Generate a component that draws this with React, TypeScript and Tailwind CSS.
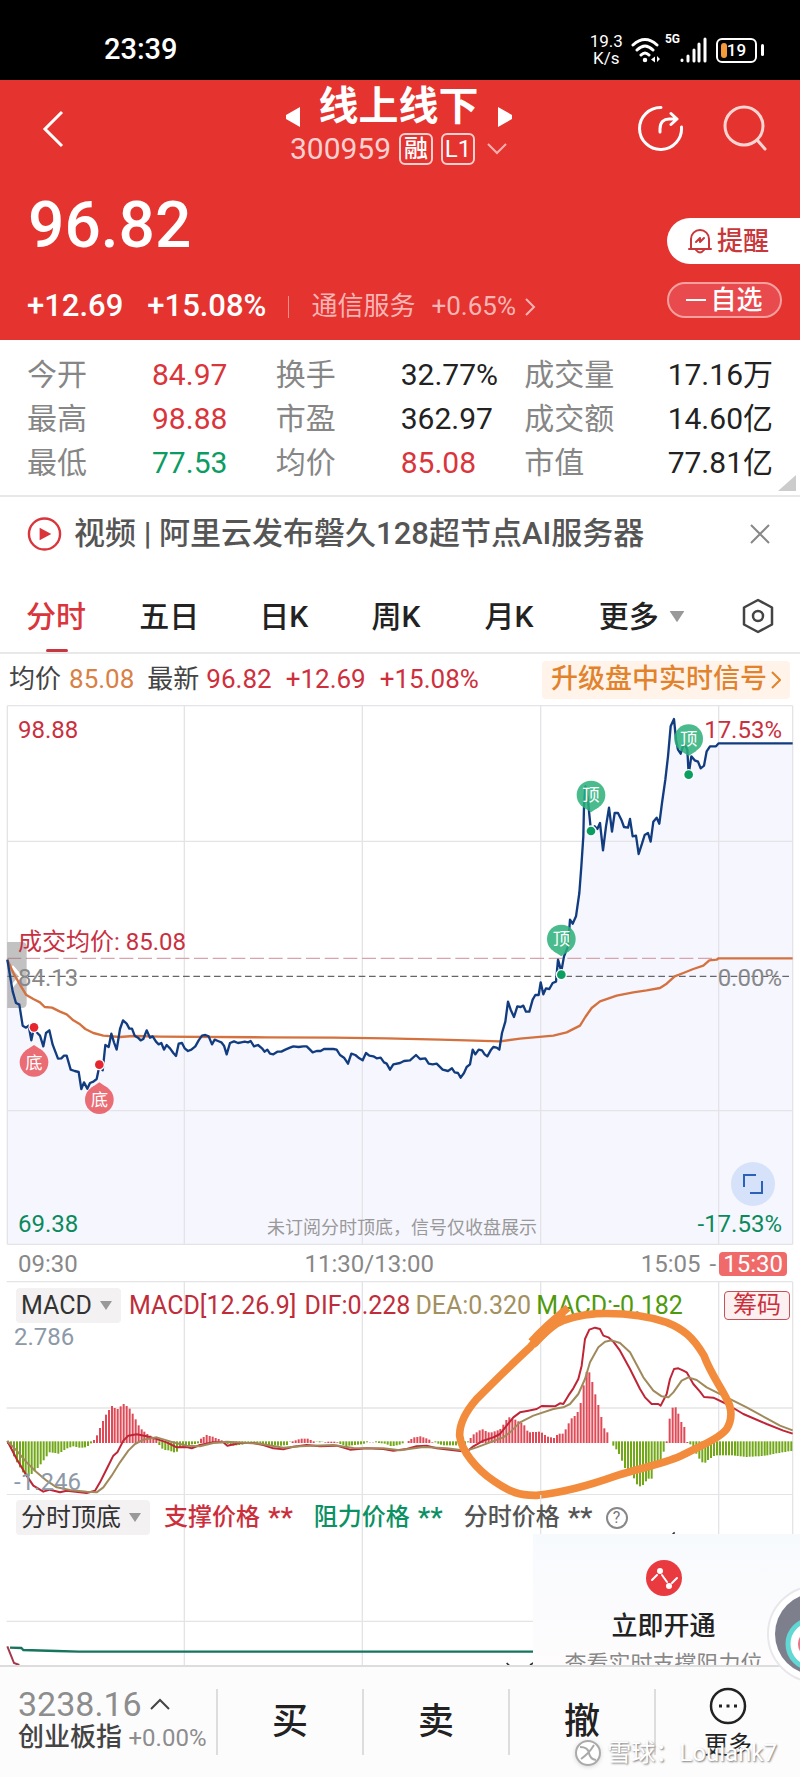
import type { ReactNode } from "react";

type Point = [number, number];

const parse = (raw: string): Point[] =>
  raw
    .trim()
    .split(/\s+/)
    .map((pair) => pair.split(",").map(Number) as Point);

// All charts use three drawing units per CSS pixel
const PRICE = parse(`
22,810 32,870 38,905 48,940 58,945 68,1008 78,1014 86,1008 94,1052 102,1013 112,1030 120,1038 130,1070 138,1030
148,1022 158,1065 174,1107 184,1106 192,1098 200,1098 212,1140 224,1144 236,1147 244,1198 252,1178 262,1197
270,1180 280,1176 290,1168 298,1130 308,1142 316,1066 326,1072 334,1032 342,1058 350,1080 360,1018 369,992
380,1002 388,1017 396,1017 404,1038 414,1044 422,1052 430,1048 440,1022 450,1044 458,1040 468,1056 476,1064
484,1060 492,1080 500,1066 510,1076 520,1090 528,1099 536,1062 546,1060 554,1076 564,1084 574,1080 586,1070
596,1052 606,1038 616,1036 626,1040 636,1064 644,1050 654,1054 664,1058 672,1068 680,1094 690,1060 702,1055
714,1060 724,1058 734,1056 744,1058 752,1054 762,1070 774,1066 786,1076 794,1086 802,1080 810,1092 820,1094
832,1086 844,1086 856,1080 870,1074 880,1070 896,1072 910,1070 920,1070 930,1080 938,1088 950,1084 962,1084
972,1078 984,1078 1000,1078 1010,1080 1020,1096 1032,1104 1044,1122 1054,1092 1066,1096 1078,1106 1088,1112
1098,1090 1108,1098 1120,1100 1130,1106 1142,1104 1152,1118 1160,1122 1170,1140 1180,1124 1200,1120 1212,1114
1230,1112 1248,1096 1260,1108 1276,1106 1286,1122 1298,1124 1310,1122 1328,1140 1344,1144 1356,1136 1364,1148
1374,1150 1382,1164 1392,1150 1400,1132 1410,1124 1418,1080 1426,1094 1436,1080 1446,1082 1454,1094 1462,1100
1472,1082 1480,1072 1490,1074 1498,1080 1506,1030 1516,996 1524,936 1532,960 1542,982 1552,950 1562,952
1570,948 1578,966 1588,966 1598,930 1606,916 1616,916 1622,878 1630,914 1638,896 1648,898 1658,880 1668,876
1674,810 1684,845 1692,800 1704,770 1710,690 1718,702 1728,680 1738,610 1744,530 1750,440 1752,350 1756,290
1764,330 1768,375 1773,424 1784,410 1792,418 1800,400 1809,482 1818,410 1827,354 1836,426 1844,370 1854,370
1864,390 1872,412 1884,414 1890,388 1898,440 1908,438 1916,493 1926,462 1934,436 1944,430 1952,456 1960,396
1970,384 1978,402 1986,340 1996,270 2004,200 2012,110 2022,88 2028,150 2034,180 2042,192 2052,160 2062,180
2066,254 2074,200 2084,212 2094,216 2102,236 2112,228 2120,185 2130,170 2148,170 2156,161 2378,161`);

const AVERAGE = parse(`
22,810 40,850 60,885 78,915 100,928 120,938 134,952 156,954 180,966 200,974 220,992 240,1004 256,1018 280,1030
310,1038 360,1042 400,1039 480,1041 800,1043 1000,1044 1160,1046 1320,1050 1400,1052 1500,1055 1560,1047
1660,1038 1700,1028 1740,1008 1756,982 1775,955 1800,935 1850,918 1900,908 1940,902 1980,895 2000,882 2024,860
2050,850 2080,838 2110,828 2128,812 2150,810 2156,806 2378,806`);

const DIF = parse(`
22,516 50,570 80,620 100,650 130,668 150,662 180,670 200,665 260,672 285,665 300,640 320,600 340,560 352,550
370,515 385,500 410,496 440,502 470,510 500,520 530,535 560,534 575,538 600,528 640,520 670,520 682,530 720,522
760,522 790,528 820,538 850,541 880,533 920,528 960,532 1010,530 1050,542 1100,538 1150,540 1180,545 1220,540
1250,532 1280,530 1310,538 1400,548 1420,532 1450,515 1480,505 1500,495 1520,470 1540,445 1560,430 1585,425
1610,420 1625,411 1665,412 1680,403 1690,405 1705,380 1720,358 1735,330 1745,290 1755,210 1768,182 1785,176
1800,180 1810,200 1825,205 1840,218 1860,245 1890,300 1920,360 1935,385 1955,405 1975,405 1982,410 2000,375
2010,330 2022,300 2035,298 2050,305 2060,310 2080,345 2100,368 2112,384 2140,386 2180,405 2230,435 2300,465
2350,485 2378,494`);

const DEA = parse(`
22,516 50,545 80,580 110,610 140,635 170,655 210,663 260,668 290,670 310,655 335,620 360,580 385,545 405,525
430,512 470,505 520,520 560,530 600,532 640,522 680,518 780,524 850,536 900,532 1000,528 1060,537 1150,538
1200,544 1270,534 1340,538 1400,545 1430,535 1470,520 1510,505 1530,490 1560,460 1600,440 1660,420 1690,415
1710,405 1735,375 1755,330 1770,280 1795,235 1815,218 1835,214 1860,222 1890,250 1930,325 1960,365 1985,382
2005,385 2020,370 2045,335 2065,325 2090,333 2120,355 2180,385 2240,415 2300,448 2340,470 2378,484`);

const HISTOGRAM = parse(`
22,-5 32,-20 42,-45 52,-65 70,-95 85,-105 100,-95 120,-72 140,-45 150,-32 175,-37 200,-22 220,-15 240,-20
260,-17 272,-8 278,3 290,20 300,45 315,80 335,112 350,100 372,118 390,102 405,75 420,45 440,28 455,20 470,8
475,-8 490,-25 510,-28 528,-35 540,-18 560,-12 595,-6 599,10 620,24 640,18 665,8 672,-5 700,-13 740,-8 780,-8
830,-13 860,-12 875,4 900,12 920,14 940,6 955,-4 985,4 1010,4 1020,-8 1040,-14 1090,-8 1115,3 1130,-4 1160,-8
1175,-16 1205,-8 1220,2 1240,16 1260,20 1285,12 1300,0 1310,-5 1330,-12 1400,-12 1408,6 1415,22 1445,42
1470,30 1500,40 1525,78 1545,70 1570,58 1585,32 1622,34 1640,20 1665,14 1675,30 1685,24 1700,45 1712,72
1725,82 1738,100 1748,150 1756,210 1766,218 1774,195 1790,130 1800,98 1810,48 1825,28 1830,2 1836,-8 1850,-25
1862,-48 1875,-80 1890,-95 1905,-115 1915,-138 1930,-130 1945,-112 1955,-112 1965,-75 1980,-65 1988,-45
1996,-8 2000,5 2003,40 2012,90 2022,116 2032,98 2040,70 2055,45 2060,5 2068,-5 2085,-30 2100,-55 2112,-68
2125,-55 2145,-42 2200,-42 2240,-47 2290,-44 2330,-36 2378,-28`);

const GRID_X = [22, 553, 1087, 1622, 2156, 2378];

const toLine = (points: Point[]) => points.map((p) => p.join(",")).join(" ");

const valueAt = (points: Point[], x: number) => {
  const next = points.findIndex((p) => p[0] >= x);
  if (next <= 0) return points[0][1];
  const [x0, y0] = points[next - 1];
  const [x1, y1] = points[next];
  return y0 + ((y1 - y0) * (x - x0)) / (x1 - x0);
};

const bars = Array.from({ length: 265 }, (_, i) => {
  const x = Math.round(24 + i * 8.9);
  return { x, value: Math.round(valueAt(HISTOGRAM, x)) };
});

const stats = [
  ["今开", "84.97", "text-[#d9353b]"],
  ["换手", "32.77%", "text-[#222]"],
  ["成交量", "17.16万", "text-[#222]"],
  ["最高", "98.88", "text-[#d9353b]"],
  ["市盈", "362.97", "text-[#222]"],
  ["成交额", "14.60亿", "text-[#222]"],
  ["最低", "77.53", "text-[#0b9c63]"],
  ["均价", "85.08", "text-[#d9353b]"],
  ["市值", "77.81亿", "text-[#222]"],
];

function StatusBar() {
  return (
    <div className="flex h-20 items-center bg-black pt-5 pr-[36px] pl-[104px] text-white">
      <span className="text-[29px] font-medium">23:39</span>
      <div className="ml-auto flex items-center">
        <span className="mr-2 flex flex-col items-center text-[17px] leading-[17px]">
          <span>19.3</span>
          <span>K/s</span>
        </span>
        <svg className="mr-1 h-[26px] w-[30px]" viewBox="0 0 30 26" fill="none" stroke="#fff" strokeWidth="3" strokeLinecap="round">
          <path d="M2 8 Q14 -3 26 8 M6 13 Q14 5 22 13 M10 18 Q14 14 18 18" />
          <circle cx="14" cy="23" r="1.5" fill="#fff" strokeWidth="1.5" />
          <path d="M20 22.500l4-3v6zM29 22l-3-3v6z" fill="#fff" stroke="none" />
        </svg>
        <span className="self-start text-xs leading-3 font-bold">5G</span>
        <svg className="mr-[9px] h-[26px] w-[27px]" viewBox="0 0 27 26" stroke="#fff" strokeWidth="3" strokeLinecap="round">
          <path d="M2 23v.5M8 19v5M14 13v11M19 7v17M25 2v22" />
        </svg>
        <div className="relative flex h-[25px] w-[41px] items-center justify-center rounded-md border-2 border-white">
          <span className="absolute top-[3px] left-[3px] h-[15px] w-[6px] rounded-sm bg-[#f59a3a]" />
          <span className="relative text-[17px] leading-none font-medium">19</span>
        </div>
        <span className="ml-1 h-3 w-[3px] rounded-sm bg-white" />
      </div>
    </div>
  );
}

function Header() {
  return (
    <header className="flex flex-col bg-[#e53330] text-white">
      <div className="flex h-[92px] items-start justify-between pr-[32px] pl-[41px]">
        <button aria-label="返回" className="mt-[30px]">
          <svg className="h-[38px] w-6" viewBox="0 0 24 38" fill="none" stroke="#fff" strokeWidth="3">
            <path d="M21 2 4 19l17 17" />
          </svg>
        </button>
        <div className="ml-[94px] flex flex-col items-center">
          <div className="flex items-center gap-[18px] pt-px">
            <button aria-label="上一只">
              <svg className="mt-5 h-5 w-4" viewBox="0 0 16 20" fill="#fff">
                <path d="M15 0v20L1 12V8z" />
              </svg>
            </button>
            <h1 className="text-[40px] leading-[52px] font-bold">线上线下</h1>
            <button aria-label="下一只">
              <svg className="mt-5 h-5 w-4" viewBox="0 0 16 20" fill="#fff">
                <path d="M1 0v20l14-8V8z" />
              </svg>
            </button>
          </div>
          <div className="flex items-center gap-2">
            <span className="text-3xl leading-8 text-[#fbd0cf]">300959</span>
            <span className="flex h-8 w-[34px] items-center justify-center rounded-md border-2 border-[#fbd0cf] text-2xl leading-none font-medium">融</span>
            <span className="flex h-8 w-[34px] items-center justify-center rounded-md border-2 border-[#fbd0cf] text-2xl leading-none">L1</span>
            <svg className="ml-1 h-3 w-5" viewBox="0 0 20 12" fill="none" stroke="#f7b0ae" strokeWidth="2">
              <path d="M1 1l9 9 9-9" />
            </svg>
          </div>
        </div>
        <div className="mt-[25px] flex gap-[38px]">
          <button aria-label="分享">
            <svg className="h-[46px] w-[46px]" viewBox="0 0 46 46" fill="none" stroke="#fff" strokeWidth="3" strokeLinecap="round" strokeLinejoin="round">
              <path d="M23 2.500A21 21 0 1 0 43.500 22M22 27v-3c0-7 4-10 9-10h6M33 8.500l6 5.500-6 5.500" />
            </svg>
          </button>
          <button aria-label="搜索">
            <svg className="h-[46px] w-[46px]" viewBox="0 0 46 46" fill="none" stroke="#fcd5d3" strokeWidth="3" strokeLinecap="round">
              <circle cx="22" cy="21" r="19" />
              <path d="M36 36l7 8" />
            </svg>
          </button>
        </div>
      </div>
      <div className="flex items-start justify-between pt-[18px] pl-[28px]">
        <strong className="text-[64px] leading-[72px] font-medium">96.82</strong>
        <button className="mt-[28px] flex h-[46px] w-[133px] items-center gap-1 rounded-l-full bg-white pl-5 text-[26px] font-medium text-[#c8373a]">
          <svg className="h-[26px] w-[26px]" viewBox="0 0 26 26" fill="none" stroke="currentColor" strokeWidth="2" strokeLinecap="round" strokeLinejoin="round">
            <path d="M4 21V11a9 9 0 0 1 18 0v10M2 21h22M9 22q4 5 8 0M9 14l4-4v4l4-4" />
          </svg>
          提醒
        </button>
      </div>
      <div className="flex h-[76px] items-center pt-[9px] pr-[18px] pl-[27px] text-[31px]">
        <span className="mr-6 font-medium">+12.69</span>
        <span className="font-medium">+15.08%</span>
        <span className="mx-[22px] h-[22px] w-px bg-[#f08f8d]" />
        <a href="#sector" className="flex items-center gap-4 text-[26px] text-[#f8b5b3]">
          <span>通信服务</span>
          <span className="flex items-center gap-2">
            +0.65%
            <svg className="h-[18px] w-3" viewBox="0 0 12 18" fill="none" stroke="currentColor" strokeWidth="2">
              <path d="M2 1l8 8-8 8" />
            </svg>
          </span>
        </a>
        <button className="-mt-[14px] ml-auto flex h-9 w-[115px] items-center justify-center gap-1 rounded-full border-2 border-[#f3a09f] bg-[#e94a4d] text-[26px] leading-none font-medium">
          <span className="h-[2px] w-5 bg-white" />
          自选
        </button>
      </div>
    </header>
  );
}

function Stats() {
  return (
    <dl className="relative grid grid-cols-3 border-b-2 border-[#e8e8e8] px-[27px] pt-[13px] pb-[10px] text-[30px] leading-[44px]">
      {stats.map(([label, value, color], i) => (
        <div key={label} className="flex">
          <dt className={i % 3 === 2 ? "text-[#868686]" : "w-[125px] text-[#868686]"}>{label}</dt>
          <dd className={i % 3 === 2 ? `ml-auto ${color}` : color}>{value}</dd>
        </div>
      ))}
      <svg className="absolute right-1 bottom-1 h-4 w-[18px]" viewBox="0 0 18 16" fill="#ccc">
        <path d="M18 0v16H0z" />
      </svg>
    </dl>
  );
}

function NewsRow() {
  return (
    <div className="flex h-[74px] items-center px-[27px] pb-px text-[#555]">
      <svg className="mr-3 h-9 w-[35px]" viewBox="0 0 36 36" fill="none" stroke="#d9353b" strokeWidth="2.500">
        <circle cx="18" cy="18" r="16" />
        <path d="M13 11.500v13l12-6.500z" fill="#d9353b" stroke="none" />
      </svg>
      <a href="#news" className="text-[31px] leading-9 font-medium whitespace-nowrap">
        视频 | 阿里云发布磐久128超节点AI服务器
      </a>
      <button aria-label="关闭" className="mr-[2px] ml-auto">
        <svg className="h-[22px] w-[22px]" viewBox="0 0 22 22" stroke="#888" strokeWidth="2">
          <path d="M2 2l18 18M20 2L2 20" />
        </svg>
      </button>
    </div>
  );
}

function Caret({ className = "" }: { className?: string }) {
  return (
    <svg className={`h-[9px] w-3 ${className}`} viewBox="0 0 12 9" fill="#999">
      <path d="M0 0h12L6 9z" />
    </svg>
  );
}

function PeriodTabs() {
  return (
    <nav className="grid h-[83px] grid-cols-[113fr_120fr_112fr_113fr_114fr_143fr_32fr] border-b-2 border-[#e8e8e8] px-[26px] pt-[9px] text-[30px] text-[#222]">
      <button className="relative justify-self-start font-medium text-[#d9353b]">
        分时
        <span className="absolute bottom-0 left-5 h-[3px] w-[22px] rounded-sm bg-[#c8373f]" />
      </button>
      {["五日", "日K", "周K", "月K"].map((name) => (
        <button key={name} className="justify-self-start font-medium">
          {name}
        </button>
      ))}
      <button className="flex items-center justify-self-start font-medium">
        更多
        <Caret className="ml-3 scale-125" />
      </button>
      <button aria-label="设置">
        <svg className="h-9 w-8" viewBox="0 0 32 36" fill="none" stroke="#444" strokeWidth="2.500" strokeLinejoin="round">
          <path d="M16 2 30 9.500v17L16 34 2 26.500v-17z" />
          <circle cx="16" cy="18" r="5" />
        </svg>
      </button>
    </nav>
  );
}

function Quote() {
  return (
    <div className="flex h-[51px] items-center pr-[10px] pl-[9px] text-[26px] text-[#444]">
      <span className="mr-2">均价</span>
      <span className="mr-[13px] text-[#d98045]">85.08</span>
      <span className="mr-[7px]">最新</span>
      <span className="mr-[14px] text-[#cf2f3c]">96.82</span>
      <span className="mr-[14px] text-[#cf2f3c]">+12.69</span>
      <span className="text-[#cf2f3c]">+15.08%</span>
      <button className="ml-auto flex h-[38px] w-[248px] items-center justify-center gap-1 rounded bg-[#fff3ea] text-[27px] font-medium text-[#e2832c]">
        升级盘中实时信号
        <svg className="h-[18px] w-[10px]" viewBox="0 0 10 18" fill="none" stroke="currentColor" strokeWidth="2">
          <path d="M1 1l8 8-8 8" />
        </svg>
      </button>
    </div>
  );
}

function Pin({ x, y, dot, label, up }: { x: number; y: number; dot: number; label: string; up?: boolean }) {
  const tip = up ? y - 52 : y + 52;
  const base = up ? y - 36 : y + 36;
  return (
    <g>
      <g opacity="0.850">
        <path d={`M${x - 24} ${base}L${x} ${tip}L${x + 24} ${base}z`} fill={up ? "#e8545c" : "#2bb07a"} />
        <circle cx={x} cy={y} r="43" fill={up ? "#e8545c" : "#2bb07a"} />
      </g>
      <text x={x} y={y + 19} textAnchor="middle" fontSize="52" fill="#fff">
        {label}
      </text>
      <circle cx={x} cy={dot} r="17" fill="#fff" />
      <circle cx={x} cy={dot} r="13" fill={up ? "#e5262f" : "#0a9f60"} />
    </g>
  );
}

function PriceChart() {
  return (
    <section className="relative">
      <svg className="block w-full" viewBox="0 46 2400 1620" fill="none">
        <polygon points={`${toLine(PRICE)} 2378,1664 22,1664`} fill="#f6f6fe" />
        <g stroke="#e4e4e8" strokeWidth="4">
          {GRID_X.map((x) => (
            <path key={x} d={`M${x} 48V1664`} />
          ))}
          {[48, 455, 1263, 1664].map((y) => (
            <path key={y} d={`M22 ${y}H2378`} />
          ))}
        </g>
        <path d="M22 806H2156" stroke="#d9a3ab" strokeWidth="4" strokeDasharray="42 14" />
        <path d="M22 860H2378" stroke="#666" strokeWidth="4" strokeDasharray="20 11" />
        <path d="M22 757h44q14 0 14 14v170q0 14-14 14H22z" fill="#777" opacity="0.450" />
        <path d="M36 830l26 30-26 30" stroke="#fff" strokeWidth="9" />
        <polyline points={toLine(AVERAGE)} stroke="#d4713f" strokeWidth="7" strokeLinejoin="round" />
        <polyline points={toLine(PRICE)} stroke="#123c80" strokeWidth="7" strokeLinejoin="round" />
        <Pin x={102} y={1118} dot={1013} label="底" up />
        <Pin x={298} y={1230} dot={1125} label="底" up />
        <Pin x={1684} y={748} dot={855} label="顶" />
        <Pin x={1773} y={316} dot={424} label="顶" />
        <Pin x={2066} y={147} dot={255} label="顶" />
      </svg>
      <div className="absolute inset-0 flex flex-col pr-[18px] pl-[18px] text-2xl leading-8">
        <div className="flex justify-between pt-[9px] text-[#c9303f]">
          <span>98.88</span>
          <span>17.53%</span>
        </div>
        <span className="mt-[180px] text-[#c9303f]">成交均价: 85.08</span>
        <div className="mt-[4px] flex justify-between text-[#888]">
          <span>84.13</span>
          <span>0.00%</span>
        </div>
        <div className="mt-auto flex items-end justify-between pb-[5px] text-[#0a8a5c]">
          <span>69.38</span>
          <span className="ml-[28px] text-lg leading-6 text-[#999]">未订阅分时顶底，信号仅收盘展示</span>
          <span>-17.53%</span>
        </div>
      </div>
      <button aria-label="全屏" className="absolute right-[25px] bottom-[39px] flex size-11 items-center justify-center rounded-full bg-[#d5e2fa]">
        <svg className="size-5" viewBox="0 0 20 20" fill="none" stroke="#2b62b8" strokeWidth="2">
          <path d="M13 1H1v12M19 7v12H7" />
        </svg>
      </button>
    </section>
  );
}

function TimeAxis() {
  return (
    <div className="flex h-9 items-center justify-between pt-px pr-[13px] pl-[18px] text-2xl text-[#888]">
      <span>09:30</span>
      <span className="ml-[20px]">11:30/13:00</span>
      <span className="flex items-center">
        <span className="mr-[9px]">15:05</span>-
        <span className="ml-[3px] rounded bg-[#f06a6a] px-[4px] leading-6 text-white">15:30</span>
      </span>
    </div>
  );
}

function ChipButton({ children }: { children: ReactNode }) {
  return (
    <button className="flex h-[35px] items-center gap-2 rounded bg-[#f3f1f2] pr-[9px] pl-[5px] text-[25px] leading-none text-[#333]">
      {children}
      <Caret />
    </button>
  );
}

function MacdPanel() {
  return (
    <section className="relative">
      <svg className="block w-full" viewBox="0 36 2400 642" fill="none">
        <g stroke="#e4e4e6" strokeWidth="4">
          {GRID_X.slice(1).map((x) => (
            <path key={x} d={`M${x} 38V677`} />
          ))}
          {[38, 417, 677].map((y) => (
            <path key={y} d={`M20 ${y}H2378`} />
          ))}
        </g>
        {bars.map(({ x, value }) =>
          value > 0 ? (
            <rect key={x} x={x - 3} y={522 - value} width="6" height={value} fill="#df4a56" />
          ) : (
            <rect key={x} x={x - 3} y={517} width="6" height={-value} fill="#72a818" />
          )
        )}
        <polyline points={toLine(DIF)} stroke="#bf2536" strokeWidth="6" strokeLinejoin="round" />
        <polyline points={toLine(DEA)} stroke="#a08a5c" strokeWidth="6" strokeLinejoin="round" />
      </svg>
      <div className="absolute inset-0 flex flex-col justify-between pt-[6px] pb-px">
        <div>
          <div className="flex items-center pr-[10px] pl-4 text-[25px] leading-[35px] whitespace-nowrap">
            <ChipButton>MACD</ChipButton>
            <span className="ml-[8px] pt-px text-[#bf2d3b]">MACD[12.26.9]</span>
            <span className="ml-2 pt-px text-[#bf2d3b]">DIF:0.228</span>
            <span className="ml-[5px] pt-px text-[#a3905f]">DEA:0.320</span>
            <span className="ml-[5px] pt-px text-[#4e9a0c]">MACD:-0.182</span>
            <button className="ml-auto h-[29px] w-[66px] rounded border border-[#c4525b] bg-[#fdf0f0] text-2xl leading-[26px] text-[#cc2f3c]">
              筹码
            </button>
          </div>
          <span className="block pl-[14px] text-2xl leading-7 text-[#8d99a8]">2.786</span>
        </div>
        <span className="pl-[14px] text-2xl leading-6 text-[#8d99a8]">-1.246</span>
      </div>
      {/* hand-drawn circle round the afternoon move */}
      <svg className="absolute inset-0 w-full overflow-visible" viewBox="0 36 2400 642" fill="none" stroke="#f28c3c" strokeWidth="23" strokeLinejoin="round">
        <path d="M1704 116C1660 150 1630 190 1590 235C1530 290 1485 335 1430 390C1395 430 1378 465 1379 500C1385 548 1430 600 1480 635C1530 670 1560 680 1610 679C1700 670 1780 645 1850 620C1920 597 1990 585 2040 562C2100 532 2160 507 2180 480C2196 455 2198 420 2180 390C2160 350 2130 310 2112 260C2080 205 2050 180 2000 160C1930 136 1850 132 1790 134C1740 138 1700 148 1670 164C1640 185 1620 205 1598 228" />
        <path d="M1692 134C1660 160 1625 192 1598 222" strokeWidth="34" />
      </svg>
    </section>
  );
}

function HiddenPrice({ label, color }: { label: string; color: string }) {
  return (
    <span className={`flex items-center gap-2 font-medium ${color}`}>
      {label}
      <span className="text-[28px]">**</span>
    </span>
  );
}

function SignalPanel() {
  return (
    <section className="relative overflow-hidden">
      <svg className="block w-full" viewBox="0 -12 2400 510" fill="none">
        <g stroke="#e4e4e6" strokeWidth="4">
          {GRID_X.slice(1).map((x) => (
            <path key={x} d={`M${x} -12V498`} />
          ))}
          <path d="M20 367H2378" />
        </g>
        <path d="M30 446l34 1 6 6 100 3 66 2H1600" stroke="#17745f" strokeWidth="7" />
        <path d="M22 442l20 50 16 6" stroke="#a5374a" strokeWidth="6" />
        <path d="M1520 492l8 8M1590 498l10-6M2018 106l6-6" stroke="#333" strokeWidth="5" />
      </svg>
      <div className="absolute inset-x-0 top-[5px] flex items-center gap-[21px] pl-4 text-2xl leading-[35px] whitespace-nowrap">
        <div className="-mr-[7px]">
          <ChipButton>分时顶底</ChipButton>
        </div>
        <HiddenPrice label="支撑价格" color="text-[#cc2f3c]" />
        <HiddenPrice label="阻力价格" color="text-[#0b9163]" />
        <HiddenPrice label="分时价格" color="text-[#555]" />
        <button className="-ml-[8px] size-[22px] rounded-full border-2 border-[#888] text-base leading-none text-[#777]">?</button>
      </div>
      <div className="absolute top-[39px] right-0 bottom-0 flex w-[267px] flex-col items-center bg-linear-to-b from-[#f7fafd] to-[#fefcfd] pt-[26px] pr-[6px]">
        <svg className="size-9 shrink-0" viewBox="0 0 36 36" fill="none" stroke="#fff" strokeWidth="2" strokeLinecap="round">
          <circle cx="18" cy="18" r="18" fill="#e93a40" stroke="none" />
          <path d="M6 20l5-5M16 15l5 7M26 23l5-5" />
          <circle cx="14" cy="11" r="3" fill="#fff" stroke="none" />
          <circle cx="23" cy="26" r="3" fill="#fff" stroke="none" />
        </svg>
        <a href="#open" className="mt-[12px] shrink-0 text-[26px] leading-9 font-medium text-[#222]">
          立即开通
        </a>
        <span className="mt-[6px] shrink-0 text-[22px] leading-7 whitespace-nowrap text-[#888]">查看实时支撑阻力位</span>
      </div>
    </section>
  );
}

function BottomBar() {
  return (
    <footer className="relative grid h-[112px] grid-cols-[218fr_146fr_146fr_146fr_144fr] border-t-2 border-[#ddd] bg-[#fdfcfd] text-4xl font-medium text-[#222]">
      <button className="mt-[22px] mb-[26px] flex flex-col border-r-2 border-[#ddd] pl-[18px] text-left font-normal whitespace-nowrap">
        <span className="flex items-center gap-2 text-[34px] leading-[30px] text-[#8d8d8d]">
          3238.16
          <svg className="h-3 w-5" viewBox="0 0 20 12" fill="none" stroke="#444" strokeWidth="2">
            <path d="M1 11l9-9 9 9" />
          </svg>
        </span>
        <span className="text-[26px] leading-9 text-[#444]">
          <span className="font-medium">创业板指</span> <span className="text-2xl text-[#8d8d8d]">+0.00%</span>
        </span>
      </button>
      <button className="mt-[22px] mb-[26px] border-r-2 border-[#ddd]">买</button>
      <button className="mt-[22px] mb-[26px] border-r-2 border-[#ddd]">卖</button>
      <button className="mt-[22px] mb-[26px] border-r-2 border-[#ddd]">撤</button>
      <button className="flex flex-col items-center pt-5 text-2xl font-normal">
        <svg className="size-[38px]" viewBox="0 0 38 38" fill="none" stroke="#222" strokeWidth="2.500">
          <circle cx="19" cy="19" r="17" />
          <path d="M10 19h3M17.500 19h3M25 19h3" strokeWidth="3" />
        </svg>
        <span className="mt-1 leading-8">更多</span>
      </button>
      <svg className="absolute -top-[82px] right-0 h-[98px] w-9" viewBox="0 0 36 98" fill="none">
        <circle cx="52" cy="49" r="48" fill="#fff" stroke="#e8e8ec" strokeWidth="2" />
        <circle cx="52" cy="49" r="41" fill="#7d7f8d" />
        <circle cx="48" cy="59" r="24" fill="#fff" stroke="#62d8d4" strokeWidth="5" />
        <circle cx="48" cy="59" r="14" fill="#ee7186" />
      </svg>
      <div className="absolute right-[23px] bottom-[8px] flex items-center gap-[5px] text-2xl leading-8 font-normal text-white text-shadow-[1px_1px_2px_#777]">
        <svg className="size-7 drop-shadow-sm" viewBox="0 0 28 28" fill="none" stroke="#aaa" strokeWidth="2">
          <circle cx="14" cy="14" r="12" fill="#fff" />
          <path d="M6 8q8 0 9 6t7 7M20 6q-3 5-6 8t-7 6" />
        </svg>
        雪球：Loulank7
      </div>
    </footer>
  );
}

export default function App() {
  return (
    <main className="w-full overflow-hidden bg-white font-[Roboto,'Noto_Sans_CJK_SC',sans-serif]">
      <StatusBar />
      <Header />
      <Stats />
      <NewsRow />
      <PeriodTabs />
      <Quote />
      <PriceChart />
      <TimeAxis />
      <MacdPanel />
      <SignalPanel />
      <BottomBar />
    </main>
  );
}
